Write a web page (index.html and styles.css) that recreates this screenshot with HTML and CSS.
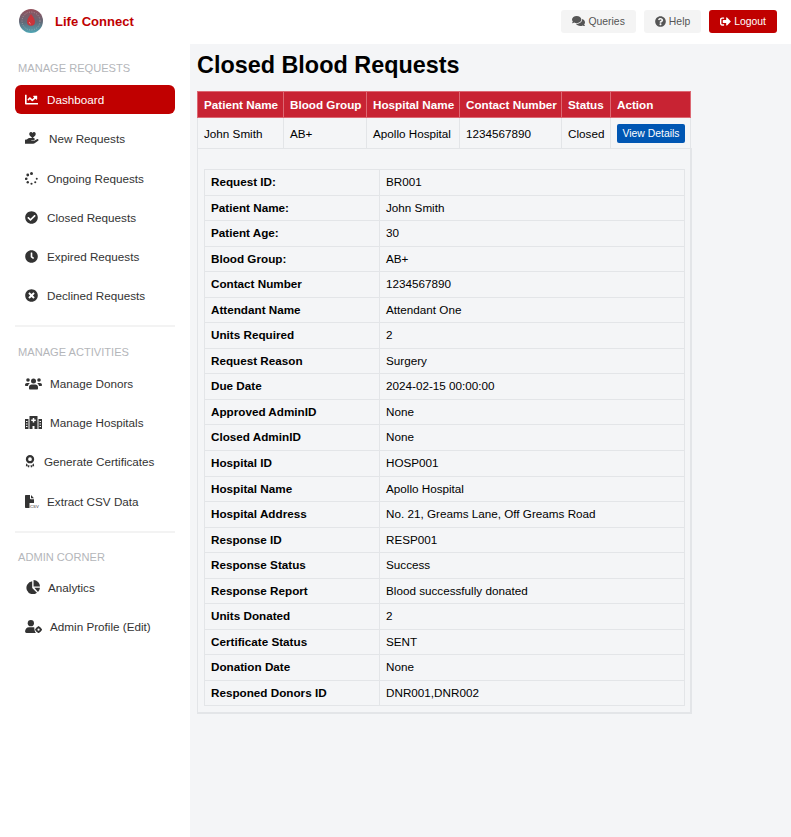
FILE: index.html
```html
<!DOCTYPE html>
<html>
<head>
    <meta charset="utf-8">
    <title>Life Connect</title>
    <link rel="stylesheet" href="styles.css">
</head>
<body>
    <header class="topbar">
        <div class="brand">
            <svg class="brand-logo" viewBox="0 0 24 24">
                <defs>
                    <linearGradient id="logoFill" x1="0" y1="0" x2="0" y2="1">
                        <stop offset="0" stop-color="#94505c"/>
                        <stop offset="0.55" stop-color="#626a78"/>
                        <stop offset="1" stop-color="#4fa6b5"/>
                    </linearGradient>
                </defs>
                <circle cx="12" cy="12" r="12" fill="url(#logoFill)"/>
                <circle cx="12" cy="12" r="9" fill="none" stroke="#c4b4ba" stroke-width="1" stroke-dasharray="1 1.5" opacity="0.6"/>
                <path d="M12 5c2.500 3.400 4 5.600 4 7.800a4 4 0 0 1-8 0C8 10.600 9.500 8.400 12 5z" fill="#c9343a"/>
                <path d="M10.300 13c0 1 .6 1.700 1.400 2" fill="none" stroke="#eeb0b0" stroke-width="0.7"/>
            </svg>
            <span class="brand-name">Life Connect</span>
        </div>
        <div class="top-actions">
            <a class="top-btn">
                <svg class="top-icon" viewBox="0 0 576 512"><path d="M416 192c0-88.400-93.100-160-208-160S0 103.600 0 192c0 34.300 14.100 65.900 38 92-13.400 30.200-35.500 54.200-35.800 54.500-2.200 2.300-2.800 5.700-1.500 8.700S4.800 352 8 352c36.600 0 66.900-12.300 88.700-25 32.200 15.700 70.300 25 111.300 25 114.900 0 208-71.600 208-160zm122 220c23.900-26 38-57.700 38-92 0-66.900-53.500-124.200-129.300-148.100.9 6.600 1.300 13.300 1.300 20.100 0 105.900-107.700 192-240 192-10.800 0-21.300-.8-31.700-1.900C207.800 439.600 281.800 480 368 480c41 0 79.100-9.200 111.300-25 21.800 12.700 52.100 25 88.700 25 3.200 0 6.100-1.900 7.300-4.800 1.300-2.900.7-6.300-1.500-8.700-.3-.3-22.400-24.200-35.800-54.500z"/></svg>
                Queries
            </a>
            <a class="top-btn">
                <svg class="top-icon help-icon" viewBox="0 0 512 512"><path d="M504 256c0 136.997-111.043 248-248 248S8 392.997 8 256C8 119.083 119.043 8 256 8s248 111.083 248 248zM262.655 90c-54.497 0-89.255 22.957-116.549 63.758-3.536 5.286-2.353 12.415 2.715 16.258l34.699 26.310c5.205 3.947 12.621 3.008 16.665-2.122 17.864-22.658 30.113-35.797 57.303-35.797 20.429 0 45.698 13.148 45.698 32.958 0 14.976-12.363 22.667-32.534 33.976C247.128 238.528 216 254.941 216 296v4c0 6.627 5.373 12 12 12h56c6.627 0 12-5.373 12-12v-1.333c0-28.462 83.186-29.647 83.186-106.667 0-58.002-60.165-102-116.531-102zM256 338c-25.365 0-46 20.635-46 46 0 25.364 20.635 46 46 46s46-20.636 46-46c0-25.365-20.635-46-46-46z"/></svg>
                Help
            </a>
            <a class="top-btn logout-btn">
                <svg class="top-icon help-icon" viewBox="0 0 512 512"><path d="M497 273L329 441c-15 15-41 4.500-41-17v-96H152c-13.300 0-24-10.700-24-24v-96c0-13.300 10.700-24 24-24h136V88c0-21.400 25.900-32 41-17l168 168c9.300 9.400 9.300 24.600 0 34zM192 436v-40c0-6.600-5.400-12-12-12H96c-17.700 0-32-14.300-32-32V160c0-17.700 14.300-32 32-32h84c6.600 0 12-5.400 12-12V76c0-6.600-5.400-12-12-12H96c-53 0-96 43-96 96v192c0 53 43 96 96 96h84c6.600 0 12-5.400 12-12z"/></svg>
                Logout
            </a>
        </div>
    </header>

    <div class="layout">
        <aside class="sidebar">
            <h4 class="side-title">MANAGE REQUESTS</h4>
            <a class="side-link active">
                <svg class="side-icon chart-icon" viewBox="0 32 512 432"><path d="M496 384H64V80c0-8.840-7.160-16-16-16H16C7.160 64 0 71.160 0 80v336c0 17.670 14.330 32 32 32h464c8.840 0 16-7.160 16-16v-32c0-8.840-7.160-16-16-16zM464 96H345.940c-21.380 0-32.090 25.850-16.970 40.970l32.400 32.400L288 242.750l-73.370-73.370c-12.500-12.500-32.760-12.500-45.250 0l-68.690 68.690c-6.250 6.250-6.250 16.380 0 22.630l22.620 22.620c6.250 6.250 16.380 6.250 22.630 0L192 237.250l73.370 73.370c12.500 12.500 32.760 12.500 45.250 0l96-96 32.400 32.400c15.120 15.120 40.970 4.410 40.970-16.970V112c.01-8.840-7.150-16-16-16z"/></svg>
                Dashboard
            </a>
            <a class="side-link">
                <svg class="side-icon w15" viewBox="1 2 28 24"><path d="M15 13.500 9.800 8.200C7.800 6 9.200 2 12.300 2c1.200 0 2.100.6 2.700 1.500C15.600 2.600 16.500 2 17.700 2c3.100 0 4.500 4 2.500 6.200z"/><path d="M1 17.500c0-1 .8-1.800 1.800-1.800h1.500l2.500-1.600c1-.6 2-.9 3.200-.9h7c1.400 0 2.100 1 2.100 2 0 1.100-.9 2-2.100 2h-4.300v1h5.500l5-3c1-.6 2.200-.3 2.800.6.600.9.300 2-.5 2.600l-6.500 4.500c-.8.500-1.500.8-2.500.8H1z"/></svg>
                New Requests
            </a>
            <a class="side-link">
                <svg class="side-icon w13" viewBox="0 0 26 26"><circle cx="13" cy="3" r="3"/><circle cx="5.500" cy="6" r="2.800"/><circle cx="2.500" cy="13.500" r="2.600"/><circle cx="5.500" cy="20.500" r="2.400"/><circle cx="13" cy="23.500" r="2.200"/><circle cx="20.500" cy="20.500" r="2.100"/><circle cx="23.500" cy="13.500" r="2"/></svg>
                Ongoing Requests
            </a>
            <a class="side-link">
                <svg class="side-icon w13" viewBox="0 0 512 512"><path d="M504 256c0 136.967-111.033 248-248 248S8 392.967 8 256 119.033 8 256 8s248 111.033 248 248zM227.314 387.314l184-184c6.248-6.248 6.248-16.379 0-22.627l-22.627-22.627c-6.248-6.249-16.379-6.249-22.628 0L216 308.118l-70.059-70.059c-6.248-6.248-16.379-6.248-22.628 0l-22.627 22.627c-6.248 6.248-6.248 16.379 0 22.627l104 104c6.249 6.249 16.379 6.249 22.628.001z"/></svg>
                Closed Requests
            </a>
            <a class="side-link">
                <svg class="side-icon w13" viewBox="0 0 512 512"><path d="M256 8C119 8 8 119 8 256s111 248 248 248 248-111 248-248S393 8 256 8zm92.490 313l-20 25a16 16 0 0 1-22.490 2.500l-67-49.720a40 40 0 0 1-15-31.230V112a16 16 0 0 1 16-16h32a16 16 0 0 1 16 16v144l58 42.500a16 16 0 0 1 2.490 22.500z"/></svg>
                Expired Requests
            </a>
            <a class="side-link">
                <svg class="side-icon w13" viewBox="0 0 512 512"><path d="M256 8C119 8 8 119 8 256s111 248 248 248 248-111 248-248S393 8 256 8zm121.600 313.100c4.700 4.700 4.700 12.300 0 17L338 377.600c-4.700 4.700-12.300 4.700-17 0L256 312l-65.100 65.600c-4.700 4.700-12.300 4.700-17 0L134.400 338c-4.700-4.700-4.700-12.300 0-17l65.600-65-65.600-65.100c-4.700-4.700-4.700-12.300 0-17l39.600-39.600c4.700-4.700 12.300-4.700 17 0l65 65.700 65.100-65.600c4.700-4.700 12.300-4.700 17 0l39.600 39.600c4.700 4.700 4.700 12.300 0 17L312 256l65.600 65.100z"/></svg>
                Declined Requests
            </a>

            <hr class="side-line">

            <h4 class="side-title">MANAGE ACTIVITIES</h4>
            <a class="side-link">
                <svg class="side-icon w17 gap8" viewBox="0 0 34 24"><circle cx="6" cy="5" r="3.600"/><circle cx="28" cy="5" r="3.600"/><circle cx="17" cy="7" r="5"/><path d="M0 15c0-2.500 1.500-4 4-4h3.500c.8 0 1.500.2 2.100.6C7.500 13 6.300 15 6 17H1.500C.7 17 0 16.300 0 15.500zM34 15c0-2.500-1.500-4-4-4h-3.500c-.8 0-1.500.2-2.100.6 2.100 1.400 3.300 3.400 3.600 5.400h4.500c.8 0 1.500-.7 1.500-1.500zM8 19.500C8 16 10.500 14 13 14h8c2.500 0 5 2 5 5.500V22c0 1.100-.9 2-2 2H10c-1.100 0-2-.9-2-2z"/></svg>
                Manage Donors
            </a>
            <a class="side-link">
                <svg class="side-icon w17 gap8" viewBox="0 0 34 26"><path d="M0 6h7v20H0zM27 6h7v20h-7zM9 0h16v26h-6v-6h-4v6H9z"/><path d="M15.500 4h3v3h3v3h-3v3h-3v-3h-3V7h3z" fill="#fff"/><path d="M2 10h3v2H2zM2 15h3v2H2zM2 20h3v2H2zM29 10h3v2h-3zM29 15h3v2h-3zM29 20h3v2h-3z" fill="#fff"/></svg>
                Manage Hospitals
            </a>
            <a class="side-link">
                <svg class="side-icon w10" viewBox="0 0 20 28"><circle cx="10" cy="9" r="6.500" fill="none" stroke="currentColor" stroke-width="5"/><path d="M2 18l3 3v3l-4 0zM18 18l-3 3v3l4 0zM6 22h3l-1 5-3-1zM14 22h-3l1 5 3-1z"/></svg>
                Generate Certificates
            </a>
            <a class="side-link">
                <svg class="side-icon w13 csv-icon" viewBox="0 0 26 26"><path d="M0 1.500C0 .7.700 0 1.500 0H10v7c0 .8.700 1.500 1.500 1.500H18V16H9v10H1.500C.7 26 0 25.300 0 24.500zM12 0l6 6.500h-6z"/><text class="csv-mark" x="10" y="25.500">CSV</text></svg>
                Extract CSV Data
            </a>

            <hr class="side-line">

            <h4 class="side-title tight">ADMIN CORNER</h4>
            <a class="side-link">
                <svg class="side-icon pie-icon" viewBox="0 0 26 26"><path d="M11.500 2.500v12.500l8.800 8.800A12 12 0 1 1 11.500 2.500z"/><path d="M14 0a12 12 0 0 1 12 12H14z"/><path d="M15.500 14.500H26a12 12 0 0 1-3.800 7.700z"/></svg>
                Analytics
            </a>
            <a class="side-link">
                <svg class="side-icon w17 gap8" viewBox="0 0 35 27"><circle cx="12" cy="6.500" r="6.500"/><path d="M0 24c0-5 3.500-9 8-9h8c1.200 0 2.300.2 3.300.7-.4 3.300.6 8.300 3.200 11.300H3c-1.700 0-3-1.300-3-3z"/><circle cx="28" cy="20" r="4" fill="none" stroke="currentColor" stroke-width="3.500"/><path d="M26.300 13h3.400v2.500h-3.400zM26.300 24.500h3.400V27h-3.400zM21 18.300h2.500v3.400H21zM32.500 18.300H35v3.400h-2.500z"/></svg>
                Admin Profile (Edit)
            </a>
        </aside>

        <main class="content">
            <h1 class="page-title">Closed Blood Requests</h1>
            <table class="req-table">
                <colgroup>
                    <col class="col-patient">
                    <col class="col-group">
                    <col class="col-hospital">
                    <col class="col-contact">
                    <col class="col-status">
                    <col class="col-action">
                </colgroup>
                <thead>
                    <tr>
                        <th>Patient Name</th>
                        <th>Blood Group</th>
                        <th>Hospital Name</th>
                        <th>Contact Number</th>
                        <th>Status</th>
                        <th>Action</th>
                    </tr>
                </thead>
                <tbody>
                    <tr>
                        <td>John Smith</td>
                        <td>AB+</td>
                        <td>Apollo Hospital</td>
                        <td>1234567890</td>
                        <td>Closed</td>
                        <td><button class="view-btn">View Details</button></td>
                    </tr>
                    <tr>
                        <td colspan="6" class="detail-cell">
                            <table class="detail-table">
                                <tr><th>Request ID:</th><td>BR001</td></tr>
                                <tr><th>Patient Name:</th><td>John Smith</td></tr>
                                <tr><th>Patient Age:</th><td>30</td></tr>
                                <tr><th>Blood Group:</th><td>AB+</td></tr>
                                <tr><th>Contact Number</th><td>1234567890</td></tr>
                                <tr><th>Attendant Name</th><td>Attendant One</td></tr>
                                <tr><th>Units Required</th><td>2</td></tr>
                                <tr><th>Request Reason</th><td>Surgery</td></tr>
                                <tr><th>Due Date</th><td>2024-02-15 00:00:00</td></tr>
                                <tr><th>Approved AdminID</th><td>None</td></tr>
                                <tr><th>Closed AdminID</th><td>None</td></tr>
                                <tr><th>Hospital ID</th><td>HOSP001</td></tr>
                                <tr><th>Hospital Name</th><td>Apollo Hospital</td></tr>
                                <tr><th>Hospital Address</th><td>No. 21, Greams Lane, Off Greams Road</td></tr>
                                <tr><th>Response ID</th><td>RESP001</td></tr>
                                <tr><th>Response Status</th><td>Success</td></tr>
                                <tr><th>Response Report</th><td>Blood successfully donated</td></tr>
                                <tr><th>Units Donated</th><td>2</td></tr>
                                <tr><th>Certificate Status</th><td>SENT</td></tr>
                                <tr><th>Donation Date</th><td>None</td></tr>
                                <tr><th>Responed Donors ID</th><td>DNR001,DNR002</td></tr>
                            </table>
                        </td>
                    </tr>
                </tbody>
            </table>
        </main>
    </div>
</body>
</html>
```

FILE: styles.css
```css
body {
    margin: 0;
    height: 837px;
    display: flex;
    flex-direction: column;
    background-color: #fff;
    color: #000;
    font: 11.7px "Liberation Sans", Arial, sans-serif;
}

.topbar {
    height: 44px;
    flex-shrink: 0;
    display: flex;
    justify-content: space-between;
    align-items: center;
    padding: 0 14px 2px 19px;
    box-sizing: border-box;
}
.brand {
    display: flex;
    align-items: center;
    gap: 12px;
}
.brand-logo {
    width: 24px;
    height: 24px;
}
.brand-name {
    color: #c00000;
    font-size: 13px;
    font-weight: bold;
}
.top-actions {
    display: flex;
    gap: 8px;
}
.top-btn {
    height: 23px;
    padding: 0 11px;
    display: flex;
    align-items: center;
    gap: 3px;
    border-radius: 3px;
    background-color: #f4f4f4;
    color: #555;
    font-size: 10.4px;
}
.top-icon {
    width: 13px;
    height: 12px;
    fill: currentColor;
}
.help-icon {
    width: 11px;
    height: 11px;
}
.logout-btn {
    background-color: #c00000;
    color: #fff;
}

.layout {
    flex: 1;
    display: flex;
    min-height: 0;
}

.sidebar {
    width: 190px;
    flex-shrink: 0;
    padding: 18px 15px 0;
    box-sizing: border-box;
}
.side-title {
    margin: 0 3px 10.2px;
    color: #b4b6ba;
    font-size: 11.1px;
    font-weight: normal;
    line-height: 13px;
}
.side-title.tight {
    margin-bottom: 8.4px;
}
.side-link {
    height: 29.2px;
    margin-bottom: 10px;
    padding-left: 10px;
    display: flex;
    align-items: center;
    gap: 9px;
    border-radius: 6px;
    color: #333;
    font-size: 11.7px;
}
.side-link.active {
    background-color: #c00000;
    color: #fff;
}
.side-icon {
    height: 13px;
    flex-shrink: 0;
    fill: currentColor;
}
.chart-icon { width: 13px; height: 11px; }
.w10 { width: 10px; }
.w13 { width: 13px; }
.w15 { width: 15px; }
.w17 { width: 17px; }
.gap8 { margin-right: -1px; }
.pie-icon {
    width: 14px;
    height: 14px;
    margin: 0 -1px 0 1px;
}
.csv-icon { overflow: visible; }
.csv-mark {
    font-size: 8.5px;
    font-family: "Liberation Sans", sans-serif;
}
.side-line {
    height: 2px;
    margin: 15px 0 18.5px;
    border: 0;
    background-color: #f3f3f3;
}

.content {
    flex: 1;
    padding: 0 7px;
    background-color: #f4f5f7;
}
.page-title {
    margin: 0;
    padding: 6px 0 10px;
    font-size: 23.4px;
    line-height: 31px;
}

.req-table {
    width: 493px;
    table-layout: fixed;
    border-collapse: collapse;
}
.col-patient { width: 86px; }
.col-group { width: 83px; }
.col-hospital { width: 93px; }
.col-contact { width: 102px; }
.col-status { width: 49px; }
.col-action { width: 80px; }

.req-table > thead th {
    height: 25px;
    padding: 0 6px;
    border: 1px solid #dc6873;
    background-color: #c82333;
    color: #fff;
    text-align: left;
    white-space: nowrap;
}
.req-table > tbody > tr > td {
    height: 30px;
    padding: 0 6px;
    border: 1px solid #e3e5e8;
}
.req-table > tbody > tr > td.detail-cell {
    padding: 20px 5px 6px 6px;
    border-width: 1px 2px 2px 1px;
}
.view-btn {
    display: block;
    width: 68px;
    height: 19px;
    padding: 0;
    border: 0;
    border-radius: 2px;
    background-color: #0056b3;
    color: #fff;
    font: 10.4px "Liberation Sans", Arial, sans-serif;
}

.detail-table {
    width: 100%;
    table-layout: fixed;
    border-collapse: collapse;
}
.detail-table th,
.detail-table td {
    padding: 5px 6px;
    border: 1px solid #e3e5e8;
    line-height: 14.55px;
    text-align: left;
}
.detail-table th {
    width: 162px;
}
```
